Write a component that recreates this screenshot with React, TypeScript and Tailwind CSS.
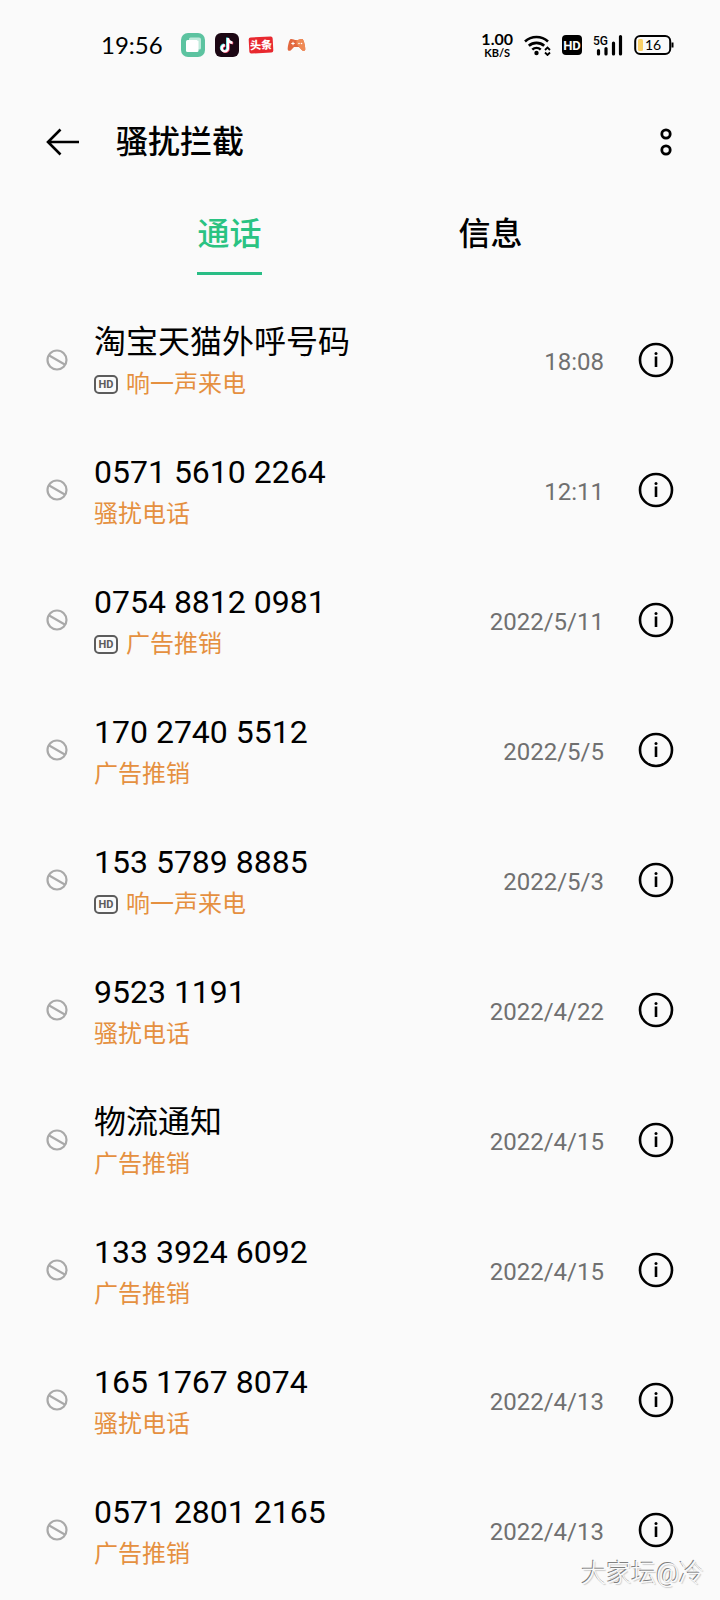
import type { ReactNode } from "react"

type Call = {
  name: string
  tag: string
  date: string
  hd?: boolean
}

const calls: Call[] = [
  { name: "淘宝天猫外呼号码", tag: "响一声来电", date: "18:08", hd: true },
  { name: "0571 5610 2264", tag: "骚扰电话", date: "12:11" },
  { name: "0754 8812 0981", tag: "广告推销", date: "2022/5/11", hd: true },
  { name: "170 2740 5512", tag: "广告推销", date: "2022/5/5" },
  { name: "153 5789 8885", tag: "响一声来电", date: "2022/5/3", hd: true },
  { name: "9523 1191", tag: "骚扰电话", date: "2022/4/22" },
  { name: "物流通知", tag: "广告推销", date: "2022/4/15" },
  { name: "133 3924 6092", tag: "广告推销", date: "2022/4/15" },
  { name: "165 1767 8074", tag: "骚扰电话", date: "2022/4/13" },
  { name: "0571 2801 2165", tag: "广告推销", date: "2022/4/13" },
]

function StatusBar() {
  return (
    <div className="flex h-[90px] items-center justify-between pr-[46px] pl-[101px]">
      <div className="flex items-center gap-2.5">
        <span className="mr-2 font-['Lato',sans-serif] text-2xl">19:56</span>

        <svg className="size-6" viewBox="0 0 24 24">
          <rect width="24" height="24" rx="7" fill="#5cc3a0" />
          <path d="M8 6a1.500 1.500 0 0 1 1.500-1.500H18A2 2 0 0 1 20 6.500V15a1.500 1.500 0 0 1-1.500 1.500H17V7H8z" fill="#bfeadb" />
          <rect x="5" y="7" width="12.500" height="12" rx="1.500" fill="#fff" />
        </svg>

        <svg className="size-6" viewBox="0 0 24 24">
          <rect width="24" height="24" rx="6" fill="#1c0714" />
          <g fill="none" strokeWidth="2.400">
            <path d="M12.200 4.500v10.300a3.100 3.100 0 1 1-3.100-3.100M12.200 5c.3 2.600 2 4 4.600 4.200" stroke="#3fe0e0" />
            <path d="M13.600 5.500v10.300a3.100 3.100 0 1 1-3.100-3.100M13.600 6c.3 2.600 2 4 4.600 4.200" stroke="#f23a62" />
            <path d="M12.900 5v10.300a3.100 3.100 0 1 1-3.100-3.100M12.900 5.500c.3 2.600 2 4 4.600 4.200" stroke="#fff" />
          </g>
        </svg>

        <span className="flex h-4 w-6 -rotate-3 items-center justify-center rounded-xs bg-[#e8282f] text-[11px] leading-none font-black text-white">
          头条
        </span>

        <svg className="ml-1 h-3.5 w-[19px]" viewBox="0 0 19 14">
          <path d="M3.500 1C6 .6 7 2 9.500 2s3.500-1.400 6-1c1.500 1 2.900 8 2.800 10.200-.2 1.800-2 2.100-3.500.7L12 9H7L4.200 11.900c-1.500 1.400-3.300 1.100-3.500-.7C.6 9 2 2 3.500 1z" fill="#e2683f" />
          <path d="M9.500 2c2.500 0 3.500-1.400 6-1 1.500 1 2.900 8 2.800 10.200-.2 1.800-2 2.100-3.500.7L9.500 6z" fill="#ef8a55" />
          <path d="M4.300 5.500h3.400M6 3.800v3.400" stroke="#fff" strokeWidth="1" />
          <circle cx="12" cy="5.500" r=".8" fill="#fff" />
          <circle cx="14.500" cy="5.500" r=".8" fill="#fff" />
        </svg>
      </div>

      <div className="flex items-center gap-[11px]">
        <div className="text-center font-['Lato','Roboto',sans-serif] font-bold">
          <div className="text-base leading-4">1.00</div>
          <div className="text-[11px] leading-3">KB/S</div>
        </div>

        <svg className="h-[22px] w-[27px]" viewBox="0 0 27 22">
          <g fill="none" stroke="#000" strokeWidth="2.600">
            <path d="M1 7.500a17 17 0 0 1 23 0" />
            <path d="M4.800 11.800a11.500 11.500 0 0 1 15.400 0" />
            <path d="M8.300 15.600a6.300 6.300 0 0 1 8.400 0" />
          </g>
          <circle cx="12.500" cy="19" r="2.200" />
          <path d="M21 16l2.500-2.500L26 16M21 18.500l2.500 2.500 2.500-2.500" fill="none" stroke="#000" strokeWidth="1.800" />
        </svg>

        <span className="flex size-5 items-center justify-center rounded-sm bg-black font-['Roboto',sans-serif] text-[13px] leading-none font-bold text-white">
          HD
        </span>

        <svg className="h-[22px] w-[30px]" viewBox="0 0 30 22">
          <text x="0" y="11" fontSize="12" fontWeight="500" fontFamily="Roboto, sans-serif">5G</text>
          <path d="M5.500 16.500v3.500M13 14.500v5.500M20.500 9v11M27.500 2.500v17.500" stroke="#000" strokeWidth="3.200" strokeLinecap="round" />
        </svg>

        <svg className="h-[22px] w-10" viewBox="0 0 40 22">
          <rect x="1.200" y="2" width="35" height="18" rx="5" fill="none" stroke="#000" strokeWidth="2" />
          <rect x="4" y="5" width="5" height="12" rx="1.500" fill="#fbd066" />
          <path d="M38.500 8.500v5" stroke="#000" strokeWidth="2" />
          <text x="19" y="16" textAnchor="middle" fontSize="14" fontFamily="Lato, sans-serif">16</text>
        </svg>
      </div>
    </div>
  )
}

function Tab({ active, children }: { active?: boolean; children: ReactNode }) {
  return (
    <button
      role="tab"
      aria-selected={!!active}
      className={
        active
          ? "border-b-[3px] border-[#29bd85] pb-3.5 text-[32px] leading-[48px] font-medium text-[#2ac382]"
          : "border-b-[3px] border-transparent pb-3.5 text-[32px] leading-[48px] font-medium"
      }
    >
      {children}
    </button>
  )
}

function BlockedIcon() {
  return (
    <svg className="size-[22px] shrink-0" viewBox="0 0 22 22" fill="none" stroke="#a9a9a9" strokeWidth="2.200">
      <circle cx="11" cy="11" r="9.500" />
      <path d="M2.800 6.300 19.200 15.700" />
    </svg>
  )
}

function CallRow({ call }: { call: Call }) {
  return (
    <li className="flex h-[130px] items-center px-[46px]">
      <BlockedIcon />
      <div className="ml-[26px] min-w-0 flex-1">
        <div className="truncate text-[32px] leading-[48px]">{call.name}</div>
        <div className="flex items-center gap-2 text-2xl leading-9 text-[#e5903f]">
          {call.hd && (
            <span className="flex h-[19px] w-6 items-center justify-center rounded-[5px] border-2 border-[#5c5c5c] font-['Roboto',sans-serif] text-[11px] leading-none font-bold text-[#5c5c5c]">
              HD
            </span>
          )}
          {call.tag}
        </div>
      </div>
      <time className="pt-1 text-2xl text-[#707070]">{call.date}</time>
      <button aria-label="详情" className="ml-[34px]">
        <svg className="size-9" viewBox="0 0 36 36">
          <circle cx="18" cy="18" r="16" fill="none" stroke="#000" strokeWidth="2.600" />
          <path d="M18 14.500v10.500" stroke="#000" strokeWidth="2.600" />
          <circle cx="18" cy="11.500" r="1.500" />
        </svg>
      </button>
    </li>
  )
}

export default function App() {
  return (
    <div className="relative min-h-screen overflow-hidden bg-[#fafafa] font-['Roboto','Noto_Sans_CJK_SC',sans-serif] text-black">
      <StatusBar />

      <header className="flex h-[104px] items-center px-[46px]">
        <button aria-label="返回">
          <svg className="h-7 w-[34px]" viewBox="0 0 34 28" fill="none" stroke="#000" strokeWidth="2.600">
            <path d="M33 14H2M14.500 1.500 2 14l12.500 12.500" />
          </svg>
        </button>
        <h1 className="ml-9 flex-1 text-[32px] leading-[48px] font-medium">骚扰拦截</h1>
        <button aria-label="更多">
          <svg className="h-[30px] w-4" viewBox="0 0 16 30" fill="none" stroke="#000" strokeWidth="2.800">
            <circle cx="8" cy="7" r="4.200" />
            <circle cx="8" cy="23" r="4.200" />
          </svg>
        </button>
      </header>

      <div role="tablist" className="flex justify-center gap-[197px] pt-4 pb-5">
        <Tab active>通话</Tab>
        <Tab>信息</Tab>
      </div>

      <ul>
        {calls.map((call, i) => (
          <CallRow key={i} call={call} />
        ))}
      </ul>

      <div className="absolute right-4 bottom-2 text-[25px] font-light text-[#fafafa] [text-shadow:-1px_-1px_0_#808080,1px_1px_1px_#ccc]">
        大家坛@冷
      </div>
    </div>
  )
}
